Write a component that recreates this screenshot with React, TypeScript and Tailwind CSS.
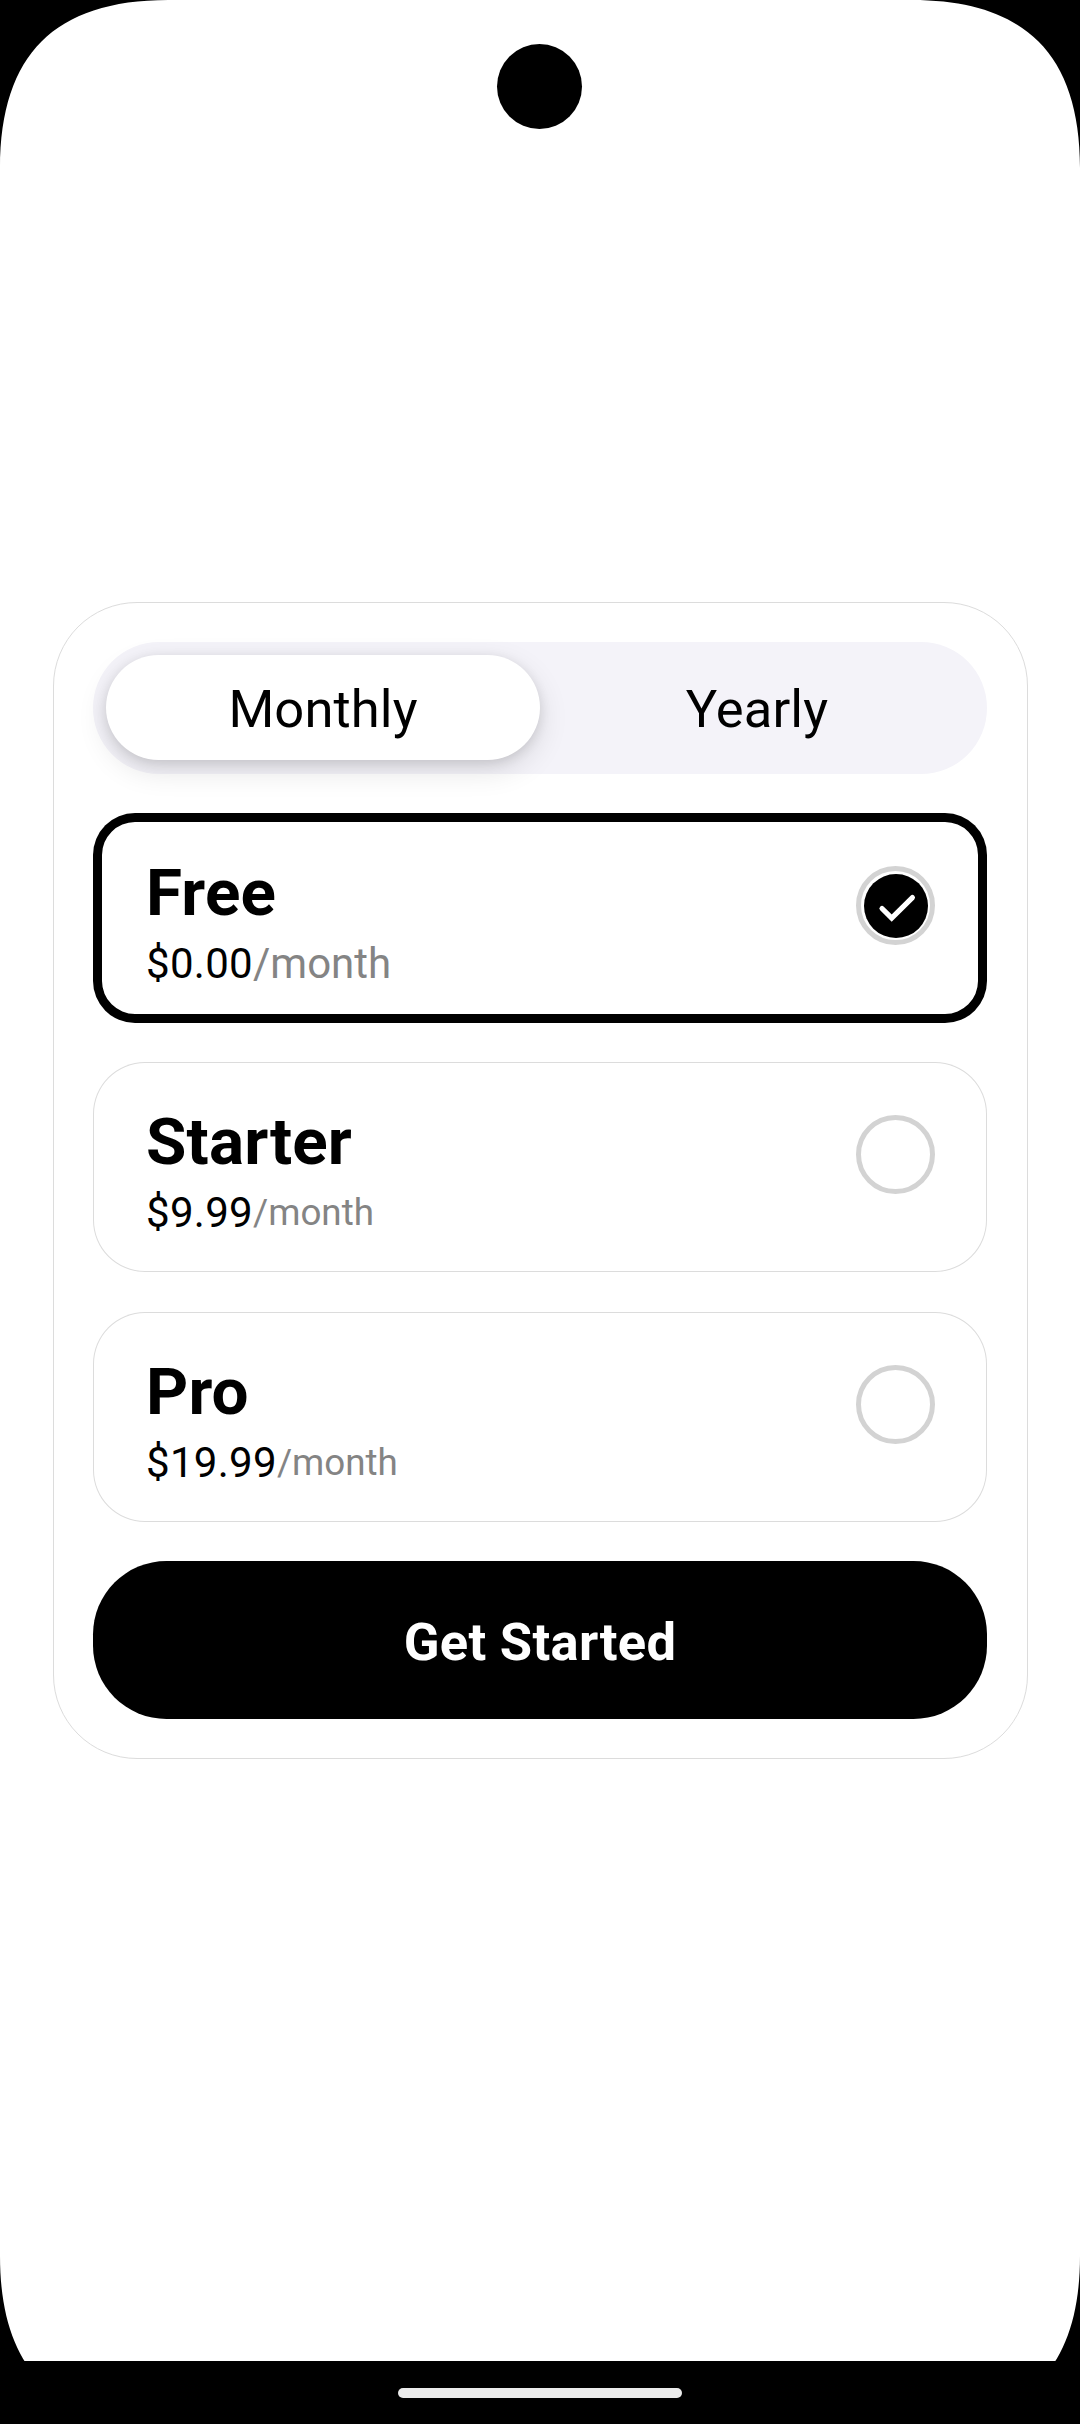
import { useState } from "react";

type Plan = { name: string; price: string; suffix: string };

const plans: Plan[] = [
  { name: "Free", price: "$0.00", suffix: "text-[42px]" },
  { name: "Starter", price: "$9.99", suffix: "text-[36.75px]" },
  { name: "Pro", price: "$19.99", suffix: "text-[36.75px]" },
];

function Corner({ className }: { className: string }) {
  return (
    <svg className={`absolute size-[170px] ${className}`} viewBox="0 0 170 170" aria-hidden="true">
      <path d="M0 0V168C0 111 14 69 41.5 41.5C69 14 111 0 168 0Z" fill="#000" />
    </svg>
  );
}

function Radio({ checked }: { checked: boolean }) {
  return (
    <span className="mt-[53px] flex size-[79px] shrink-0 items-center justify-center rounded-full border-[5px] border-[#d3d3d3]">
      {checked && (
        <svg className="size-[64px]" viewBox="0 0 64 64" aria-hidden="true">
          <circle cx="32" cy="32" r="32" fill="#000" />
          <path d="M18 34.5L27.7 44.2L48.4 23.6" fill="none" stroke="#fff" strokeWidth="5.2" strokeLinecap="round" />
        </svg>
      )}
    </span>
  );
}

export default function App() {
  const [period, setPeriod] = useState("Monthly");
  const [selected, setSelected] = useState("Free");

  return (
    <div className="relative flex h-[2424px] w-[1080px] flex-col overflow-hidden bg-white font-[Roboto,sans-serif] text-black">
      <header className="flex h-[602px] shrink-0 justify-center pt-11 pr-px">
        <div className="size-[85px] rounded-full bg-black" />
      </header>

      <main className="ml-[53px] flex h-[1157px] w-[975px] shrink-0 flex-col rounded-[84px] border border-[#dcdcdc] pt-[39px] pr-[40px] pl-[39px]">
        <div className="flex h-[132px] shrink-0 rounded-full bg-[#f4f3f9] p-[13px]">
          {["Monthly", "Yearly"].map((label) => (
            <button
              key={label}
              onClick={() => setPeriod(label)}
              className={`h-[105px] flex-1 rounded-full pt-[4px] text-[52.5px] leading-none tracking-[0.1px] ${
                period === label
                  ? "bg-white shadow-[0_10px_30px_rgba(0,0,0,0.12),0_3px_12px_rgba(0,0,0,0.11)]"
                  : ""
              }`}
            >
              {label}
            </button>
          ))}
        </div>

        <div className="mt-[39px] flex flex-col">
          {plans.map((plan) => {
            const active = selected === plan.name;
            return (
              <button
                key={plan.name}
                onClick={() => setSelected(plan.name)}
                className={`mb-[40px] flex h-[210px] items-start justify-between bg-white pr-[52px] pl-[53px] text-left first:mb-[39px] ${
                  active
                    ? "rounded-[42px] inset-ring-[9px] inset-ring-black"
                    : "rounded-[52px] inset-ring-1 inset-ring-[#dcdcdc]"
                }`}
              >
                <span className="flex flex-col pt-[41px]">
                  <span className="text-[65.6px] leading-[77px] font-bold tracking-[0.15px]">{plan.name}</span>
                  <span className="mt-2 flex items-center leading-[49px]">
                    <span className="text-[42px] tracking-[0.3px]">{plan.price}</span>
                    <span className={`text-[#848484] ${plan.suffix}`}>/month</span>
                  </span>
                </span>
                <Radio checked={active} />
              </button>
            );
          })}
        </div>

        <button className="-mt-px h-[158px] shrink-0 rounded-[73.5px] bg-black pt-[4px] text-[52.5px] leading-none font-bold tracking-[0.3px] text-white">
          Get Started
        </button>
      </main>

      <footer className="mt-auto flex h-[63px] shrink-0 items-start justify-center bg-black pt-[27px]">
        <div className="h-2.5 w-[284px] rounded-full bg-[#ebebeb]" />
      </footer>

      <Corner className="top-0 left-0" />
      <Corner className="top-0 right-0 -scale-x-100" />
      <Corner className="bottom-0 left-0 -scale-y-100" />
      <Corner className="right-0 bottom-0 -scale-100" />
    </div>
  );
}
